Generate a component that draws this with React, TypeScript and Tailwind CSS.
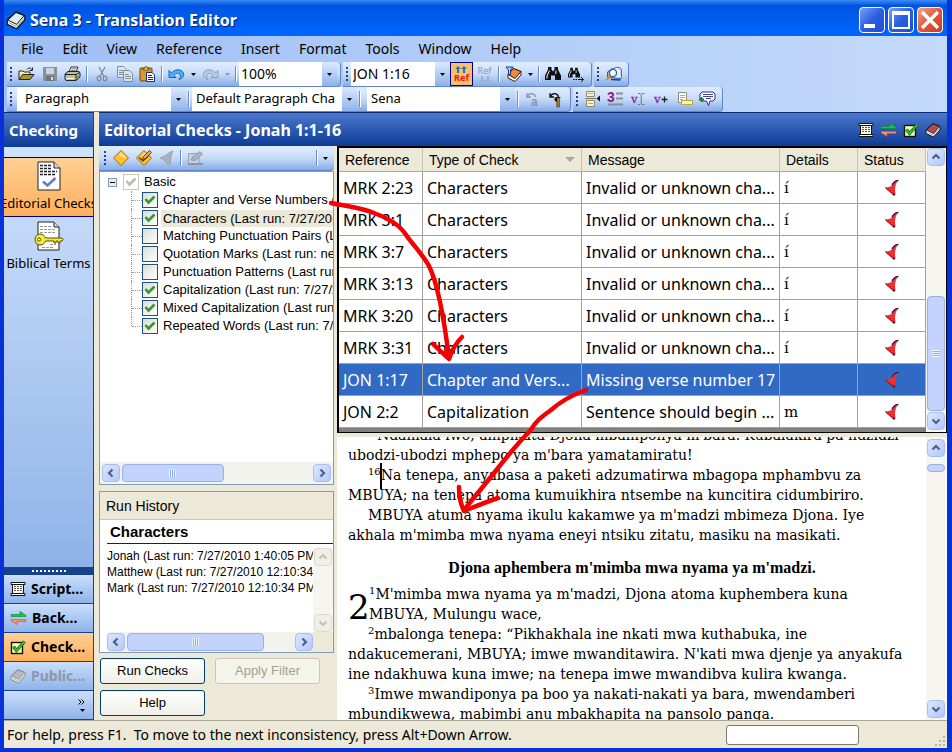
import { useState } from "react";
import type { ReactNode } from "react";

const ui = "font-['Noto_Sans','Open_Sans',sans-serif]";
const arial = "font-['Liberation_Sans',Arial,sans-serif]";

/* ---------- icons ---------- */

function BookIcon({ cover = "#d9f1f5", edge = "#111111", size = 16 }: { cover?: string; edge?: string; size?: number }) {
    return (
        <svg width={size} height={size} viewBox="0 0 16 16" className="shrink-0">
            <path d="M1 8 L8 1.500 L15 4.500 L15 8 L8.500 15 L1 11.500 Z" fill="#fff" stroke={edge} strokeWidth="1" strokeLinejoin="round" />
            <path d="M1.500 8 L8 2 L14.500 4.500 L8.500 11.500 Z" fill={cover} stroke={edge} strokeWidth=".8" strokeLinejoin="round" />
            <path d="M2 10 L8.500 13.200 L14.500 6.500" fill="none" stroke="#888" strokeWidth=".7" />
        </svg>
    );
}

function OpenIcon() {
    return (
        <svg width="17" height="16" viewBox="0 0 17 16">
            <path d="M1 13 V5 h4 l1 1 h6 v3" fill="#fff6a8" stroke="#222" />
            <path d="M1 13.5 L4.5 8.5 H16 L12 13.5 Z" fill="#a59a28" stroke="#222" />
            <path d="M9 3.5 C10.500 1.500 13 1.500 14 4 M14.500 1.500 V4.500 H11.500" fill="none" stroke="#222" />
        </svg>
    );
}

function SaveIcon() {
    return (
        <svg width="16" height="16" viewBox="0 0 16 16">
            <path d="M1 1 h14 v14 h-13 l-1 -1 z" fill="#8a8f98" />
            <rect x="4" y="2" width="8" height="6" fill="#c9d6ea" />
            <rect x="4" y="10" width="8" height="5" fill="#70757d" />
            <rect x="9" y="11" width="2" height="3" fill="#d3ddec" />
        </svg>
    );
}

function PrintIcon() {
    return (
        <svg width="17" height="16" viewBox="0 0 17 16">
            <path d="M5 6 L7 1 H14 L12 6 Z" fill="#fff" stroke="#333" />
            <path d="M7.500 2.800 H12.500 M7 4.500 H11.500" stroke="#555" strokeWidth=".8" />
            <path d="M1 8 L4 5.500 H15 L16 7 V11 L12 14.500 H2 L1 13 Z" fill="#b9bdb5" stroke="#222" />
            <path d="M1 8.500 H12 L16 6.500 M12 8.500 V14" fill="none" stroke="#222" />
            <path d="M2.500 12.500 H10.500" stroke="#fff" />
            <rect x="8" y="10" width="3" height="1.500" fill="#e4d312" />
            <rect x="13" y="10" width="2" height="1.500" fill="#2fae34" />
        </svg>
    );
}

function CutIcon() {
    return (
        <svg width="14" height="16" viewBox="0 0 14 16" fill="none" stroke="#858c97">
            <path d="M4 1 L9 10.500 M10 1 L5 10.500" strokeWidth="1.300" />
            <ellipse cx="4" cy="12.500" rx="1.800" ry="2.300" strokeWidth="1.300" />
            <ellipse cx="10" cy="12.500" rx="1.800" ry="2.300" strokeWidth="1.300" />
        </svg>
    );
}

function CopyIcon() {
    return (
        <svg width="16" height="16" viewBox="0 0 16 16" fill="#dbe5f4" stroke="#868d98">
            <path d="M.5 .5 H6.500 L9.500 3.500 V11.500 H.5 Z" />
            <path d="M2 4.500 H6 M2 6.500 H6 M2 8.500 H6" />
            <path d="M6.500 4.500 H12.500 L15.500 7.500 V15.500 H6.500 Z" />
            <path d="M8 8.500 H12 M8 10.500 H14 M8 12.500 H14" />
        </svg>
    );
}

function PasteIcon() {
    return (
        <svg width="17" height="16" viewBox="0 0 17 16">
            <rect x="1" y="2" width="12" height="13" rx="1" fill="#d89a2b" stroke="#6b4208" />
            <path d="M4 4 V2.500 H5.500 L6 .8 H8 L8.500 2.500 H10 V4 Z" fill="#f5e34a" stroke="#4a3a08" strokeWidth=".8" />
            <path d="M7.500 6.500 H13 L15.500 9 V15.500 H7.500 Z" fill="#fff" stroke="#1e2a80" />
            <path d="M9 9.500 H13 M9 11.500 H14 M9 13.500 H14" stroke="#1e2a80" />
        </svg>
    );
}

function UndoIcon({ color = "#1460d0", light = "#49b5ee", flip = false }: { color?: string; light?: string; flip?: boolean }) {
    return (
        <svg width="17" height="14" viewBox="0 0 17 14">
            <g transform={flip ? "translate(17 0) scale(-1 1)" : undefined}>
                <path d="M1 3.500 V10.500 H8 L5.800 8.300 C8 5.600 11.500 5.800 12.300 8 C12.700 9.500 12 11 11 12.500 C15 11.500 16.500 8.500 15.300 5.800 C13.500 2 7.500 1.500 3.500 6 Z" fill={light} stroke={color} strokeLinejoin="round" />
            </g>
        </svg>
    );
}

function RefIcon({ up }: { up: boolean }) {
    const c = up ? "#1979b8" : "#9fb0c8";
    const arrows = (
        <svg width="14" height="7" viewBox="0 0 14 7" fill={c}>
            {up ? (
                <path d="M4 0 L7 3 H5 V7 H3 V3 H1 Z M10 0 L13 3 H11 V7 H9 V3 H7 Z" />
            ) : (
                <path d="M4 7 L7 4 H5 V0 H3 V4 H1 Z M10 7 L13 4 H11 V0 H9 V4 H7 Z" />
            )}
        </svg>
    );
    return (
        <span className="flex flex-col items-center">
            {up && arrows}
            <span className={up ? "text-[9px] leading-[10px] font-bold text-[#e02410]" : "text-[9px] leading-[10px] text-[#8d9ab0]"}>Ref</span>
            {!up && arrows}
        </span>
    );
}

function BookFilterIcon() {
    return (
        <svg width="17" height="17" viewBox="0 0 17 17">
            <path d="M3 8 L8 2.500 L16 5.500 L16 9 L10 15.500 L3 12 Z" fill="#fff" stroke="#3a1a08" />
            <path d="M3 8.500 L8.500 2.500 L16 5.500 L10 12.500 Z" fill="#f08a35" stroke="#3a1a08" strokeLinejoin="round" />
            <path d="M1 1 H8 L5.500 4 V9 L3.500 7.500 V4 Z" fill="#a9daf6" stroke="#123a80" />
        </svg>
    );
}

function BinocularsIcon({ next = false }: { next?: boolean }) {
    return (
        <svg width="17" height="16" viewBox="0 0 17 16">
            <g transform={next ? "translate(0 1) scale(.75)" : undefined}>
                <path d="M3 1 H6.500 V3.500 L8 5.500 L9.500 3.500 V1 H13 V3.500 L16 9.500 V14 H10 V9.500 H6 V14 H0 V9.500 L3 3.500 Z" fill="#111" />
                <path d="M4.500 4.500 L2 10 M11 4.500 L10.800 8 M2 12.500 V10" stroke="#fff" fill="none" />
            </g>
            {next && <path d="M5 13.500 h1.500 m1 0 h1.500 m1 0 h5 M13 11 L15.500 13.500 L13 16" stroke="#111" fill="none" />}
        </svg>
    );
}

function FindDocIcon() {
    return (
        <svg width="18" height="16" viewBox="0 0 18 16">
            <path d="M2.500 6 L8 2 V12 L2.500 11 Z" fill="#8fb6e8" stroke="#2d5ba6" />
            <path d="M9 2.500 C12 0 17 2 16.500 5 C15.500 8 17.500 10 16 12.500 L9 12 Z" fill="#dff0ff" stroke="#2d5ba6" />
            <circle cx="8" cy="7" r="3.500" fill="#f3f9ff" stroke="#3c5f92" strokeWidth="1.200" />
            <path d="M5.500 9.700 L1.500 14" stroke="#d78b22" strokeWidth="2.400" />
            <path d="M6 13.500 L15.500 14" stroke="#1c3f91" strokeWidth="1.500" />
        </svg>
    );
}

function TurnIcon({ glyph, color }: { glyph: string; color: string }) {
    return (
        <svg width="16" height="17" viewBox="0 0 16 17">
            <path d="M2 2 V6 H6 M2.500 5.500 C4 1.500 9.500 1.500 10.500 6" fill="none" stroke={color} strokeWidth="1.300" />
            <text x="6" y="15" fontSize="12" fontWeight="bold" fill={color} fontFamily="Liberation Sans">{glyph}</text>
        </svg>
    );
}

function InsertPageIcon() {
    return (
        <svg width="16" height="16" viewBox="0 0 16 16">
            <path d="M1.500 .5 H9.500 V5.500 H1.500 Z M1.500 9.500 H9.500 V15.500 H1.500 Z" fill="#f7f3ca" stroke="#8e8c70" />
            <path d="M3 2.500 H8 M3 12.500 H8" stroke="#aaa78a" />
            <path d="M0 7.500 H11" stroke="#777" />
            <path d="M15 4.500 V10.500 L11.500 7.500 Z" fill="#111" />
        </svg>
    );
}

function ChapterIcon() {
    return (
        <svg width="17" height="16" viewBox="0 0 17 16">
            <text x="0" y="11" fontSize="14" fontWeight="bold" fill="#8b1c7d" fontFamily="Liberation Sans">3</text>
            <path d="M9 2.500 H16 M9 7.500 H16" stroke="#8b8f96" strokeWidth="2" />
            <path d="M1 13.500 H16" stroke="#8b8f96" strokeWidth="2" />
        </svg>
    );
}

function VerseIcon({ plus = false }: { plus?: boolean }) {
    return (
        <svg width="16" height="14" viewBox="0 0 16 14">
            <text x="0" y="11" fontSize="13" fill="#8b1c9d" stroke="#8b1c9d" strokeWidth=".3" fontFamily="Liberation Serif">v</text>
            {plus ? (
                <path d="M7.500 7.500 H13.500 M10.500 4.500 V10.500" stroke="#222" strokeWidth="1.300" />
            ) : (
                <path d="M7 1.500 H9.500 M11 1.500 H13.500 M10.200 2 V12 M7 12.500 H9.500 M11 12.500 H13.500" stroke="#777" />
            )}
        </svg>
    );
}

function FootnoteIcon() {
    return (
        <svg width="16" height="14" viewBox="0 0 16 14">
            <path d="M1.500 .5 H9.500 V10.500 H1.500 Z" fill="#fff" stroke="#8c8c8c" />
            <path d="M3 3.500 H8 M3 5.500 H8 M3 7.500 H6" stroke="#aaa" />
            <rect x="4.500" y="8.500" width="11" height="4" fill="#fbf7a5" stroke="#b9a94c" />
        </svg>
    );
}

function CommentIcon() {
    return (
        <svg width="17" height="16" viewBox="0 0 17 16">
            <path d="M3 1 H14 L16 3 V8 L14 10 H11 L9.500 14.500 L7.500 10 H3 L1 8 V3 Z" fill="#fff" stroke="#2a2f86" />
            <path d="M4 3.500 H14 M4 5.500 H14 M7 7.500 H12" stroke="#2a2f86" strokeWidth=".9" />
            <path d="M0 8.500 H5 M2.500 6 V11" stroke="#1c7a2e" strokeWidth="1.800" />
        </svg>
    );
}

function DiamondIcon({ pencil = false }: { pencil?: boolean }) {
    return (
        <svg width="18" height="18" viewBox="0 0 18 18">
            <path d="M9 1.500 L16.500 9 L9 16.500 L1.500 9 Z" fill="#ffc12e" stroke="#a8680e" strokeLinejoin="round" />
            <path d="M9 3 L15 9 L12 9 L6.500 6 Z" fill="#ffe07c" />
            {pencil && (
                <>
                    <path d="M4 8.500 L8 12 L13.500 7" fill="none" stroke="#5d3408" strokeWidth="1.200" />
                    <path d="M7.500 10.500 L8.500 7.500 L14.500 1.500 L16.500 3.500 L10.500 9.500 Z" fill="#e9a95c" stroke="#5d3408" strokeWidth=".9" />
                </>
            )}
        </svg>
    );
}

function GrayFlagIcon() {
    return (
        <svg width="16" height="17" viewBox="0 0 16 17">
            <path d="M14 1 C10 2 9 5 1 8 C3 9 6 10 9 15 L11.500 14 C11 9 12 5 14 1 Z" fill="#a7b1c1" stroke="#98a3b5" />
        </svg>
    );
}

function GrayEditIcon() {
    return (
        <svg width="17" height="16" viewBox="0 0 17 16">
            <path d="M1.500 3.500 H12 V13.500 H1.500 Z" fill="#c6d0de" stroke="#97a2b3" />
            <path d="M1 14 H16" stroke="#8994a6" strokeWidth="2" />
            <path d="M4 10 L6 6.500 L13 1.500 L15.500 4 L8 10.500 Z" fill="#a9b4c5" stroke="#8f9aac" />
        </svg>
    );
}

function ScrollIcon() {
    return (
        <svg width="16" height="16" viewBox="0 0 16 16" className="shrink-0">
            <rect x="2.500" y="2.500" width="11" height="11" fill="#fffbe9" stroke="#111" />
            <path d="M1 1.500 H15 V3.500 H1 Z M1 12.500 H15 V14.500 H1 Z" fill="#fff" stroke="#111" />
            <path d="M4 5.500 H12 M4 7.500 H12 M4 9.500 H12" stroke="#555" strokeDasharray="2 1" />
        </svg>
    );
}

function SwapIcon() {
    return (
        <svg width="17" height="16" viewBox="0 0 17 16" className="shrink-0">
            <path d="M1 4.500 H10 V1.500 L16 5.500 V6.500 H1 Z" fill="#12c93c" stroke="#0b8a28" strokeWidth=".6" />
            <path d="M16 11.500 H7 V14.500 L1 10.500 V9.500 H16 Z" fill="#ff8f70" stroke="#d84a2c" strokeWidth=".6" />
        </svg>
    );
}

function CheckIcon() {
    return (
        <svg width="16" height="16" viewBox="0 0 16 16" className="shrink-0">
            <rect x="1.500" y="3.500" width="11" height="11" fill="#ffffb4" stroke="#111" strokeWidth="1.400" />
            <path d="M3.500 7.500 L6.500 11.500 L14.500 2.500" fill="none" stroke="#0c6a10" strokeWidth="3.200" />
            <path d="M3.500 7.500 L6.500 11.500 L14.500 2.500" fill="none" stroke="#35c128" strokeWidth="1.800" />
        </svg>
    );
}

function PageCheckIcon() {
    return (
        <svg width="24" height="30" viewBox="0 0 24 30" className="shrink-0">
            <path d="M1 1 H17 L23 7 V29 H1 Z" fill="#fff" stroke="#222" />
            <path d="M17 1 V7 H23" fill="#ddd" stroke="#222" />
            <path d="M3 4.500 H14 M3 7.500 H14 M3 10.500 H20 M3 13.500 H18" stroke="#222" strokeWidth="1.300" strokeDasharray="3 1" />
            <path d="M6 20.500 L10.500 24.500 L18.500 17" fill="none" stroke="#5b80cc" strokeWidth="2.600" />
        </svg>
    );
}

function PageKeyIcon() {
    return (
        <svg width="30" height="30" viewBox="0 0 30 30" className="shrink-0">
            <path d="M4 1 H20 L25 6 V29 H4 Z" fill="#fff" stroke="#222" />
            <path d="M20 1 V6 H25" fill="#ddd" stroke="#222" />
            <path d="M6 5.500 H17 M6 8.500 H22 M6 11.500 H21 M16 23.500 H22 M8 26.500 H20" stroke="#999" strokeDasharray="3 1" />
            <path d="M6 13 C9 13 11 15 11.500 17 H28 L29.500 18.500 L28 20 H26 V22 H24 V20 H22 V22 H20 V20 H11.500 C11 22 9 24 6 24 C3 24 1 21.500 1 18.500 C1 15.500 3 13 6 13 Z" fill="#f6ea35" stroke="#55500a" />
            <circle cx="5" cy="18.500" r="1.600" fill="#fff" stroke="#55500a" />
        </svg>
    );
}

function FlagIcon() {
    return (
        <svg width="16" height="18" viewBox="0 0 16 18" className="mx-auto block">
            <path d="M14 1 C11 1 9.500 3.500 8 6 C6 8.500 4 8 1.500 8.500 C3 11 6.500 12.500 9 15.500 L11.500 14.500 C10.500 11 11 8 12 5 Z" fill="#f0302c" />
            <path d="M14.500 1.500 C11 1.200 9.500 3.500 8 6" fill="none" stroke="#4a1f5e" strokeWidth="1.500" />
            <path d="M1.500 8.500 C3 11 6.500 12.500 9.500 15.500" fill="none" stroke="#9a2038" strokeWidth="1.200" />
            <circle cx="10" cy="15.500" r="1.300" fill="#5a1c40" />
        </svg>
    );
}

/* ---------- small parts ---------- */

function Chevron({ dir, color = "#4d6185" }: { dir: "up" | "down" | "left" | "right"; color?: string }) {
    const d = {
        up: "M1.500 6.500 L5 3 L8.500 6.500",
        down: "M1.500 3.500 L5 7 L8.500 3.500",
        left: "M6.500 1.500 L3 5 L6.500 8.500",
        right: "M3.500 1.500 L7 5 L3.500 8.500",
    };
    return (
        <svg width="10" height="10" viewBox="0 0 10 10">
            <path d={d[dir]} fill="none" stroke={color} strokeWidth="2.200" />
        </svg>
    );
}

function ScrollButton({ dir, disabled = false }: { dir: "up" | "down" | "left" | "right"; disabled?: boolean }) {
    return (
        <button
            aria-label={`Scroll ${dir}`}
            disabled={disabled}
            className={
                disabled
                    ? "flex size-[18px] shrink-0 items-center justify-center rounded-sm border border-[#dddbd0] bg-[#f0efe6]"
                    : "flex size-[18px] shrink-0 items-center justify-center rounded-sm border border-[#a9bdf0] bg-linear-to-br from-[#dbe6ff] to-[#b5c8f8]"
            }
        >
            <Chevron dir={dir} color={disabled ? "#c5c3b8" : "#4d6185"} />
        </button>
    );
}

function Thumb({ className, vertical = false, ridges = true }: { className: string; vertical?: boolean; ridges?: boolean }) {
    return (
        <div className={`flex shrink-0 items-center justify-center rounded-sm border border-[#98b1e4] bg-[#c3d3fd] ${className}`}>
            {ridges && (
                <svg width="8" height="8" viewBox="0 0 8 8" stroke="#eef4fe">
                    <path d={vertical ? "M0 .5 H8 M0 2.500 H8 M0 4.500 H8 M0 6.500 H8" : "M.5 0 V8 M2.500 0 V8 M4.500 0 V8 M6.500 0 V8"} />
                    <path d={vertical ? "M1 1.500 H8 M1 3.500 H8 M1 5.500 H8" : "M1.500 1 V8 M3.500 1 V8 M5.500 1 V8"} stroke="#8cb0f8" />
                </svg>
            )}
        </div>
    );
}

function Grip() {
    return (
        <div className="flex w-2 shrink-0 flex-col items-center justify-center gap-[2px]">
            {[0, 1, 2, 3].map((i) => (
                <span key={i} className="size-[2px] bg-[#27417a]" />
            ))}
        </div>
    );
}

function Sep() {
    return (
        <div className="flex w-[6px] shrink-0 justify-center py-1">
            <span className="w-px bg-[#6a8ccb]" />
            <span className="w-px bg-white" />
        </div>
    );
}

function Tool({ label, children, active = false }: { label: string; children: ReactNode; active?: boolean }) {
    return (
        <button
            aria-label={label}
            className={
                active
                    ? "flex w-[23px] shrink-0 items-center justify-center border border-[#000080] bg-[#ffbd69]"
                    : "flex w-[23px] shrink-0 items-center justify-center"
            }
        >
            {children}
        </button>
    );
}

function Drop({ color = "#000000" }: { color?: string }) {
    return (
        <svg width="5" height="3" viewBox="0 0 5 3" className="shrink-0">
            <path d="M0 0 H5 L2.500 3 Z" fill={color} />
        </svg>
    );
}

function DropButton({ label, color }: { label: string; color?: string }) {
    return (
        <button aria-label={label} className="flex w-[11px] shrink-0 items-center justify-center">
            <Drop color={color} />
        </button>
    );
}

function Combo({ label, value, width, text }: { label: string; value: string; width: string; text: string }) {
    return (
        <div className={`grid shrink-0 bg-white ${width}`}>
            <select aria-label={label} className={`w-full appearance-none bg-transparent pr-4 outline-none [grid-area:1/1] ${text}`}>
                <option>{value}</option>
            </select>
            <span className="pointer-events-none flex w-[15px] items-center justify-center justify-self-end bg-linear-to-b from-[#dbe9fd] to-[#8fb2ea] [grid-area:1/1]">
                <Drop />
            </span>
        </div>
    );
}

function Strip({ children }: { children: ReactNode }) {
    return (
        <div className="flex h-[25px] shrink-0 rounded-r border-r border-b border-[#5f86c9] bg-linear-to-b from-[#e1edfe] via-[#c7dbf9] to-[#86abe6] pr-[3px]">
            {children}
        </div>
    );
}

function TreeCheck({ checked, onChange, id, gray = false }: { checked: boolean; onChange?: () => void; id: string; gray?: boolean }) {
    return (
        <span className="grid size-4 shrink-0">
            <input
                id={id}
                type="checkbox"
                checked={checked}
                onChange={onChange}
                readOnly={!onChange}
                className={
                    gray
                        ? "size-4 appearance-none border border-[#c9c7ba] bg-white [grid-area:1/1]"
                        : "size-4 appearance-none border border-[#1c5180] bg-linear-to-br from-[#dcdcd7] to-white [grid-area:1/1]"
                }
            />
            {checked && (
                <svg width="16" height="16" viewBox="0 0 16 16" className="pointer-events-none [grid-area:1/1]">
                    <path d="M3.500 7 L6.500 10.500 L12.500 4.500" fill="none" stroke={gray ? "#bdbbb0" : "#2f9a2c"} strokeWidth="2.600" />
                </svg>
            )}
        </span>
    );
}

/* ---------- data ---------- */

const menus = ["File", "Edit", "View", "Reference", "Insert", "Format", "Tools", "Window", "Help"];

const initialChecks = [
    { name: "Chapter and Verse Numbers", run: "(Last run: 7/27/2010)", on: true },
    { name: "Characters", run: "(Last run: 7/27/2010)", on: true },
    { name: "Matching Punctuation Pairs", run: "(Last run: never)", on: false },
    { name: "Quotation Marks", run: "(Last run: never)", on: false },
    { name: "Punctuation Patterns", run: "(Last run: never)", on: false },
    { name: "Capitalization", run: "(Last run: 7/27/2010)", on: true },
    { name: "Mixed Capitalization", run: "(Last run: 7/27/2010)", on: true },
    { name: "Repeated Words", run: "(Last run: 7/27/2010)", on: true },
];

const results = [
    ["MRK 2:23", "Characters", "Invalid or unknown cha...", "í"],
    ["MRK 3:1", "Characters", "Invalid or unknown cha...", "í"],
    ["MRK 3:7", "Characters", "Invalid or unknown cha...", "í"],
    ["MRK 3:13", "Characters", "Invalid or unknown cha...", "í"],
    ["MRK 3:20", "Characters", "Invalid or unknown cha...", "í"],
    ["MRK 3:31", "Characters", "Invalid or unknown cha...", "í"],
    ["JON 1:17", "Chapter and Vers...", "Missing verse number 17", ""],
    ["JON 2:2", "Capitalization", "Sentence should begin ...", "m"],
];

const modes = [
    { name: "Script...", icon: <ScrollIcon /> },
    { name: "Back...", icon: <SwapIcon /> },
    { name: "Check...", icon: <CheckIcon /> },
    { name: "Public...", icon: <BookIcon cover="#b5b9c0" edge="#85898f" /> },
];

/* ---------- sections ---------- */

function TitleBar() {
    return (
        <header className="flex h-9 shrink-0 items-center gap-1 bg-linear-to-b from-[#3a8cf5] via-[#0054e3] via-15% to-[#0066ff] pt-[3px] pr-1 pl-[2px]">
            <BookIcon size={20} />
            <h1 className={`flex-1 text-base font-bold text-white [text-shadow:1px_1px_1px_#0a1f6b] ${ui}`}>Sena 3 - Translation Editor</h1>
            <div className="flex gap-[3px]">
                <button aria-label="Minimize" className="flex size-[26px] items-end rounded border border-white bg-linear-to-br from-[#7aa0f5] via-[#2a5fe0] to-[#1a4fd8] p-1">
                    <span className="h-1 w-[11px] bg-white" />
                </button>
                <button aria-label="Maximize" className="flex size-[26px] items-center justify-center rounded border border-white bg-linear-to-br from-[#7aa0f5] via-[#2a5fe0] to-[#1a4fd8]">
                    <span className="size-[18px] border-2 border-t-4 border-white" />
                </button>
                <button aria-label="Close" className="flex size-[26px] items-center justify-center rounded border border-white bg-linear-to-br from-[#f0a188] via-[#e2573a] to-[#c93a1c]">
                    <svg width="20" height="20" viewBox="0 0 20 20">
                        <path d="M2 2 L18 18 M18 2 L2 18" stroke="#fff" strokeWidth="3.500" />
                    </svg>
                </button>
            </div>
        </header>
    );
}

function Toolbars() {
    return (
        <div className={`shrink-0 bg-linear-to-r from-[#9ebef5] to-[#c4dafa] text-black ${ui}`}>
            <nav className="flex h-[26px] items-center gap-[19px] pl-[17px]">
                {menus.map((m) => (
                    <button key={m} className="text-sm">{m}</button>
                ))}
            </nav>
            <div className="flex gap-[2px] pl-[3px]">
                <Strip>
                    <Grip />
                    <Tool label="Open"><OpenIcon /></Tool>
                    <Tool label="Save"><SaveIcon /></Tool>
                    <Tool label="Print"><PrintIcon /></Tool>
                    <Sep />
                    <Tool label="Cut"><CutIcon /></Tool>
                    <Tool label="Copy"><CopyIcon /></Tool>
                    <Tool label="Paste"><PasteIcon /></Tool>
                    <Sep />
                    <Tool label="Undo"><UndoIcon /></Tool>
                    <DropButton label="Undo list" />
                    <Tool label="Redo"><UndoIcon flip color="#929eb2" light="#bccadf" /></Tool>
                    <DropButton label="Redo list" color="#8d99ad" />
                    <Sep />
                    <Combo label="Zoom" value="100%" width="w-[98px]" text="pl-[2px] text-sm" />
                </Strip>
                <Strip>
                    <Grip />
                    <Combo label="Go to reference" value="JON 1:16" width="w-[99px]" text="pl-[2px] text-sm" />
                    <Tool label="Send reference" active><RefIcon up /></Tool>
                    <Tool label="Receive reference"><RefIcon up={false} /></Tool>
                    <Sep />
                    <Tool label="Filter books"><BookFilterIcon /></Tool>
                    <DropButton label="Filter list" />
                    <Sep />
                    <Tool label="Find"><BinocularsIcon /></Tool>
                    <Tool label="Find next"><BinocularsIcon next /></Tool>
                </Strip>
                <Strip>
                    <Grip />
                    <Tool label="Find in dictionary"><FindDocIcon /></Tool>
                </Strip>
            </div>
            <div className="flex gap-[2px] pl-[3px]">
                <Strip>
                    <Grip />
                    <Combo label="Paragraph style" value="Paragraph" width="ml-[2px] w-[169px]" text="pl-2 text-[13px]" />
                    <Sep />
                    <Combo label="Character style" value="Default Paragraph Cha" width="w-[165px]" text="pl-1 text-[13px]" />
                    <Sep />
                    <Combo label="Writing system" value="Sena" width="ml-1 w-[148px]" text="pl-1 text-[13px]" />
                    <Sep />
                    <Tool label="Previous untranslated"><TurnIcon glyph="a" color="#8b95a6" /></Tool>
                    <Tool label="Next paragraph"><TurnIcon glyph="¶" color="#111111" /></Tool>
                </Strip>
                <Strip>
                    <Grip />
                    <Tool label="Insert section"><InsertPageIcon /></Tool>
                    <Tool label="Insert chapter"><ChapterIcon /></Tool>
                    <Tool label="Insert verse"><VerseIcon /></Tool>
                    <Tool label="Insert verses"><VerseIcon plus /></Tool>
                    <Tool label="Insert footnote"><FootnoteIcon /></Tool>
                    <Tool label="Insert comment"><CommentIcon /></Tool>
                </Strip>
            </div>
        </div>
    );
}

function Sidebar() {
    return (
        <aside className={`flex w-[90px] shrink-0 flex-col border-r border-[#15428b] ${ui}`}>
            <h2 className="flex h-[35px] shrink-0 items-center border-t border-[#0a2a78] bg-linear-to-b from-[#4c79cc] to-[#0b3b96] pl-[5px] text-[15px] font-bold text-white">Checking</h2>
            <div className="flex-1 overflow-hidden bg-linear-to-b from-[#cfe1fb] to-[#8fb3e8] pt-[10px]">
                <button className="flex h-[60px] w-full flex-col items-center border-y border-[#000080] bg-linear-to-b from-[#ffcf94] to-[#ffb05a] pt-[3px]">
                    <PageCheckIcon />
                    <span className="text-[13px] leading-6 whitespace-nowrap">Editorial Checks</span>
                </button>
                <button className="flex h-[60px] w-full flex-col items-center pt-1">
                    <PageKeyIcon />
                    <span className="text-[13px] leading-6 whitespace-nowrap">Biblical Terms</span>
                </button>
            </div>
            <div className="flex h-2 shrink-0 items-center justify-center gap-[2px] bg-[#15428b]">
                {[0, 1, 2, 3, 4, 5, 6, 7, 8].map((i) => (
                    <span key={i} className="size-[2px] bg-white" />
                ))}
            </div>
            {modes.map((m) => (
                <button
                    key={m.name}
                    disabled={m.name === "Public..."}
                    className={
                        m.name === "Check..."
                            ? "flex h-[29px] shrink-0 items-center gap-[5px] border-b border-[#15428b] bg-linear-to-b from-[#ffcf94] to-[#ffb05a] pl-[6px] text-sm font-bold whitespace-nowrap"
                            : "flex h-[29px] shrink-0 items-center gap-[5px] border-b border-[#15428b] bg-linear-to-b from-[#cbdffb] to-[#8fb3ea] pl-[6px] text-sm font-bold whitespace-nowrap disabled:text-[#8c97aa]"
                    }
                >
                    {m.icon}
                    {m.name}
                </button>
            ))}
            <button aria-label="More" className="flex h-[29px] shrink-0 flex-col items-end justify-center gap-1 border-b border-[#15428b] bg-linear-to-b from-[#cbdffb] to-[#8fb3ea] pr-2">
                <svg width="7" height="6" viewBox="0 0 7 6" fill="none" stroke="#000">
                    <path d="M.5 .5 L3 3 L.5 5.500 M3.500 .5 L6 3 L3.500 5.500" />
                </svg>
                <Drop />
            </button>
        </aside>
    );
}

function ChecksPane() {
    const [checks, setChecks] = useState(initialChecks);

    const toggle = (i: number) => setChecks(checks.map((c, n) => (n === i ? { ...c, on: !c.on } : c)));

    return (
        <section className={`flex w-[235px] shrink-0 flex-col pb-1 ${arial}`}>
            <div className="flex h-[25px] shrink-0 rounded-r border-b border-[#5f86c9] bg-linear-to-b from-[#e1edfe] via-[#c7dbf9] to-[#86abe6] pr-[3px] pl-[2px]">
                <Grip />
                <Tool label="Show checks"><DiamondIcon /></Tool>
                <Tool label="Edit checks"><DiamondIcon pencil /></Tool>
                <Tool label="Flag"><GrayFlagIcon /></Tool>
                <Sep />
                <Tool label="Edit"><GrayEditIcon /></Tool>
                <span className="flex-1" />
                <Sep />
                <DropButton label="Toolbar options" />
            </div>
            <div className="flex min-h-0 flex-1 flex-col border border-[#7f9db9] bg-white">
                <div className="flex-1 overflow-hidden pt-px text-[13px] leading-[18px] whitespace-nowrap">
                    <div className="flex items-center pl-2">
                        <button aria-label="Collapse" className="mr-[6px] flex size-[9px] items-center justify-center border border-[#7b9ebd] bg-[#eeede5]">
                            <span className="h-px w-[5px] bg-black" />
                        </button>
                        <TreeCheck id="basic" checked gray />
                        <label htmlFor="basic" className="pl-[5px]">Basic</label>
                    </div>
                    {checks.map((c, i) => (
                        <div key={c.name} className="flex h-[18px] items-center pl-[31px]">
                            <span className={i === checks.length - 1 ? "h-[9px] shrink-0 self-start border-l border-dotted border-[#999]" : "h-[18px] shrink-0 border-l border-dotted border-[#999]"} />
                            <span className="w-[10px] shrink-0 border-t border-dotted border-[#999]" />
                            <TreeCheck id={c.name} checked={c.on} onChange={() => toggle(i)} />
                            <label htmlFor={c.name} className={i === 1 ? "ml-[3px] h-[17px] flex-1 bg-[#ece9d8] pl-[2px] leading-[17px]" : "ml-[3px] pl-[2px]"}>
                                {c.name} {c.run}
                            </label>
                        </div>
                    ))}
                </div>
                <div className="flex shrink-0 gap-[2px] bg-[#f3f3ee] p-[2px]">
                    <ScrollButton dir="left" />
                    <Thumb className="w-[102px]" />
                    <span className="flex-1" />
                    <ScrollButton dir="right" />
                </div>
            </div>
            <div className="mt-[6px] flex h-[162px] shrink-0 flex-col border border-[#7f9db9] bg-white">
                <h3 className="flex h-7 shrink-0 items-center border-b border-[#cbc7b8] bg-[#ece9d8] pl-[6px] text-sm">Run History</h3>
                <div className="flex min-h-0 flex-1 flex-col pl-[7px]">
                    <h4 className="h-6 shrink-0 border-b border-[#222] pl-[3px] text-[15px] leading-6 font-bold">Characters</h4>
                    <div className="mt-1 flex min-h-0 flex-1">
                        <div className="flex min-w-0 flex-1 flex-col">
                            <ul className="flex-1 overflow-hidden text-xs leading-4 whitespace-nowrap">
                                <li>Jonah (Last run: 7/27/2010 1:40:05 PM)</li>
                                <li>Matthew (Last run: 7/27/2010 12:10:34 PM)</li>
                                <li>Mark (Last run: 7/27/2010 12:10:34 PM)</li>
                            </ul>
                            <div className="flex shrink-0 gap-[2px] bg-[#f3f3ee] py-px">
                                <ScrollButton dir="left" />
                                <Thumb className="w-[137px]" />
                                <span className="flex-1" />
                                <ScrollButton dir="right" />
                            </div>
                        </div>
                        <div className="flex w-5 shrink-0 flex-col items-center justify-between bg-[#f6f5ef]">
                            <ScrollButton dir="up" disabled />
                            <div className="flex w-full flex-col items-center">
                                <ScrollButton dir="down" disabled />
                                <span className="h-5 w-full bg-[#ece9d8]" />
                            </div>
                        </div>
                    </div>
                </div>
            </div>
            <div className="mt-[5px] grid shrink-0 grid-cols-[105px_105px] gap-x-[10px] gap-y-[6px] pl-px text-[13px]">
                <button className="h-[26px] rounded-[3px] border border-[#003c74] bg-linear-to-b from-white to-[#f0efe8]">Run Checks</button>
                <button disabled className="h-[26px] rounded-[3px] border border-[#c9c7ba] bg-[#f5f4ea] text-[#a1a192]">Apply Filter</button>
                <button className="h-[26px] rounded-[3px] border border-[#003c74] bg-linear-to-b from-white to-[#f0efe8]">Help</button>
            </div>
        </section>
    );
}

function ResultsGrid() {
    const [selected, setSelected] = useState(6);
    const head = "border-r border-b border-r-[#c5c2b2] border-b-[#aca899] px-[6px] text-left font-normal";
    const cell = "overflow-hidden border-r border-b border-[#a5a295] pl-1 whitespace-nowrap";

    return (
        <div className="flex shrink-0 border-t-2 border-r border-b border-l-2 border-black bg-[#808080]">
            <div className="min-w-0 flex-1 pb-1">
                <table className="w-full table-fixed border-separate border-spacing-0 bg-white">
                    <colgroup>
                        <col className="w-[84px]" />
                        <col className="w-[159px]" />
                        <col />
                        <col className="w-[78px]" />
                        <col className="w-[68px]" />
                    </colgroup>
                    <thead className={`bg-[#ece9d8] text-sm ${arial}`}>
                        <tr className="h-6">
                            <th className={head}>Reference</th>
                            <th className={head}>
                                <span className="flex items-center justify-between">
                                    Type of Check
                                    <svg width="10" height="5" viewBox="0 0 10 5">
                                        <path d="M0 0 H10 L5 5 Z" fill="#aca899" />
                                    </svg>
                                </span>
                            </th>
                            <th className={head}>Message</th>
                            <th className={head}>Details</th>
                            <th className={head}>Status</th>
                        </tr>
                    </thead>
                    <tbody className={`text-base leading-5 ${ui}`}>
                        {results.map(([ref, type, message, details], i) => (
                            <tr key={ref} onClick={() => setSelected(i)} className={i === selected ? "h-8 bg-[#316ac5] text-white" : "h-8"}>
                                <td className={cell}>{ref}</td>
                                <td className={cell}>{type}</td>
                                <td className={cell}>{message}</td>
                                <td className={`${cell} font-['DejaVu_Serif',serif] text-[15px]`}>{details}</td>
                                <td className={`${cell} pr-1`}><FlagIcon /></td>
                            </tr>
                        ))}
                    </tbody>
                </table>
            </div>
            <div className="flex w-5 shrink-0 flex-col items-center gap-px bg-[#f6f5ef] pb-[2px]">
                <ScrollButton dir="up" />
                <span className="flex-1" />
                <Thumb vertical className="h-[115px] w-[18px]" />
                <ScrollButton dir="down" />
            </div>
        </div>
    );
}

function Line({ children, indent = false }: { children: ReactNode; indent?: boolean }) {
    return <span className={indent ? "block pl-5" : "block"}>{children}</span>;
}

function Verse({ n }: { n: number }) {
    return <sup className="relative -top-[5px] align-baseline text-[10px] leading-none">{n}</sup>;
}

function TextView() {
    return (
        <div className="mt-1 flex min-h-0 flex-1 bg-white">
            <article className="min-w-0 flex-1 overflow-hidden pl-[11px] font-['DejaVu_Serif','Liberation_Serif',serif] text-sm leading-5 whitespace-nowrap">
                <p className="-mt-3">
                    <Line indent>&nbsp;&nbsp;Ndamala iwo, ampikata Djona mbamponya m'bara. Kubalakira pa ndzidzi</Line>
                    <Line>ubodzi-ubodzi mphepo ya m'bara yamatamiratu!</Line>
                </p>
                <p>
                    <Line indent>
                        <Verse n={16} />
                        <span className="relative">
                            <span className="absolute -top-1 -left-px h-[26px] w-[2px] bg-black" />
                            Na tenepa, anyabasa a paketi adzumatirwa mbagopa mphambvu za
                        </span>
                    </Line>
                    <Line>MBUYA; na tenepa atoma kumuikhira ntsembe na kuncitira cidumbiriro.</Line>
                </p>
                <p>
                    <Line indent>MBUYA atuma nyama ikulu kakamwe ya m'madzi mbimeza Djona. Iye</Line>
                    <Line>akhala m'mimba mwa nyama eneyi ntsiku zitatu, masiku na masikati.</Line>
                </p>
                <h3 className="mt-[13px] mb-[6px] pr-[10px] text-center font-['Liberation_Serif',serif] text-base leading-5 font-bold">Djona aphembera m'mimba mwa nyama ya m'madzi.</h3>
                <div className="flex">
                    <span className="w-[21px] shrink-0 text-[34px] leading-[46px]">2</span>
                    <p>
                        <Line><Verse n={1} />M'mimba mwa nyama ya m'madzi, Djona atoma kuphembera kuna</Line>
                        <Line>MBUYA, Mulungu wace,</Line>
                    </p>
                </div>
                <p className="-mt-[6px]">
                    <Line indent><Verse n={2} />mbalonga tenepa: “Pikhakhala ine nkati mwa kuthabuka, ine</Line>
                    <Line>ndakucemerani, MBUYA; imwe mwanditawira. N'kati mwa djenje ya anyakufa</Line>
                    <Line>ine ndakhuwa kuna imwe; na tenepa imwe mwandibva kulira kwanga.</Line>
                </p>
                <p>
                    <Line indent><Verse n={3} />Imwe mwandiponya pa boo ya nakati-nakati ya bara, mwendamberi</Line>
                    <Line>mbundikwewa, mabimbi anu mbakhapita na pansolo panga.</Line>
                </p>
            </article>
            <div className="mr-px flex w-5 shrink-0 flex-col items-center bg-[#f6f5ef] py-[2px]">
                <ScrollButton dir="up" />
                <Thumb vertical ridges={false} className="mt-[7px] h-2 w-[18px]" />
                <span className="flex-1" />
                <ScrollButton dir="down" />
            </div>
        </div>
    );
}

/* red pen marks drawn over the window */
function PenMarks() {
    return (
        <svg width="952" height="752" viewBox="0 0 952 752" className="pointer-events-none absolute top-0 -left-1" fill="none" stroke="#f40000" strokeWidth="4.500" strokeLinecap="round" strokeLinejoin="round">
            <path d="M331 203 C346 206 362 208 374 213 C388 218 398 224 404 232 C412 244 424 256 429 266 C438 284 444 318 449 358" />
            <path d="M433 344 C440 351 445 355 449 359 C452 350 458 341 462 337" />
            <path d="M586 390 C572 395 560 402 551 410 C540 418 536 421 530 431 C518 443 505 459 494 473 L464 510" />
            <path d="M459 487 C459 496 461 505 464 511 C474 507 486 502 498 498" />
        </svg>
    );
}

export default function App() {
    return (
        <div className="relative flex h-screen min-h-[640px] flex-col overflow-hidden border-r-[5px] border-b-4 border-l-4 border-[#0831d9] bg-[#ece9d8] text-black">
            <TitleBar />
            <Toolbars />
            <div className="flex min-h-0 flex-1 gap-[5px] border-b border-[#aca899]">
                <Sidebar />
                <main className="flex min-w-0 flex-1 flex-col">
                    <div className={`flex h-[34px] shrink-0 items-center justify-between border-t border-[#0a2a78] bg-linear-to-b from-[#4c79cc] to-[#0b3b96] pr-[6px] pl-[5px] ${ui}`}>
                        <h2 className="text-base font-bold text-white">Editorial Checks - Jonah 1:1-16</h2>
                        <div className="flex gap-[6px]">
                            <ScrollIcon />
                            <SwapIcon />
                            <CheckIcon />
                            <BookIcon cover="#b54a52" />
                        </div>
                    </div>
                    <div className="flex min-h-0 flex-1 gap-[3px]">
                        <ChecksPane />
                        <section className="flex min-w-0 flex-1 flex-col">
                            <ResultsGrid />
                            <TextView />
                        </section>
                    </div>
                </main>
            </div>
            <footer className={`flex h-[27px] shrink-0 items-center justify-between pl-[3px] text-sm ${ui}`}>
                <p className="whitespace-pre">For help, press F1.  To move to the next inconsistency, press Alt+Down Arrow.</p>
                <div className="flex h-full items-center gap-[74px]">
                    <span className="h-5 w-[133px] rounded-[3px] border border-[#7a786c] bg-white" />
                    <svg width="14" height="14" viewBox="0 0 14 14" fill="#b8b4a2" className="self-end">
                        <path d="M10 2 h2 v2 h-2z M6 6 h2 v2 h-2z M10 6 h2 v2 h-2z M2 10 h2 v2 h-2z M6 10 h2 v2 h-2z M10 10 h2 v2 h-2z" />
                    </svg>
                </div>
            </footer>
            <PenMarks />
        </div>
    );
}
